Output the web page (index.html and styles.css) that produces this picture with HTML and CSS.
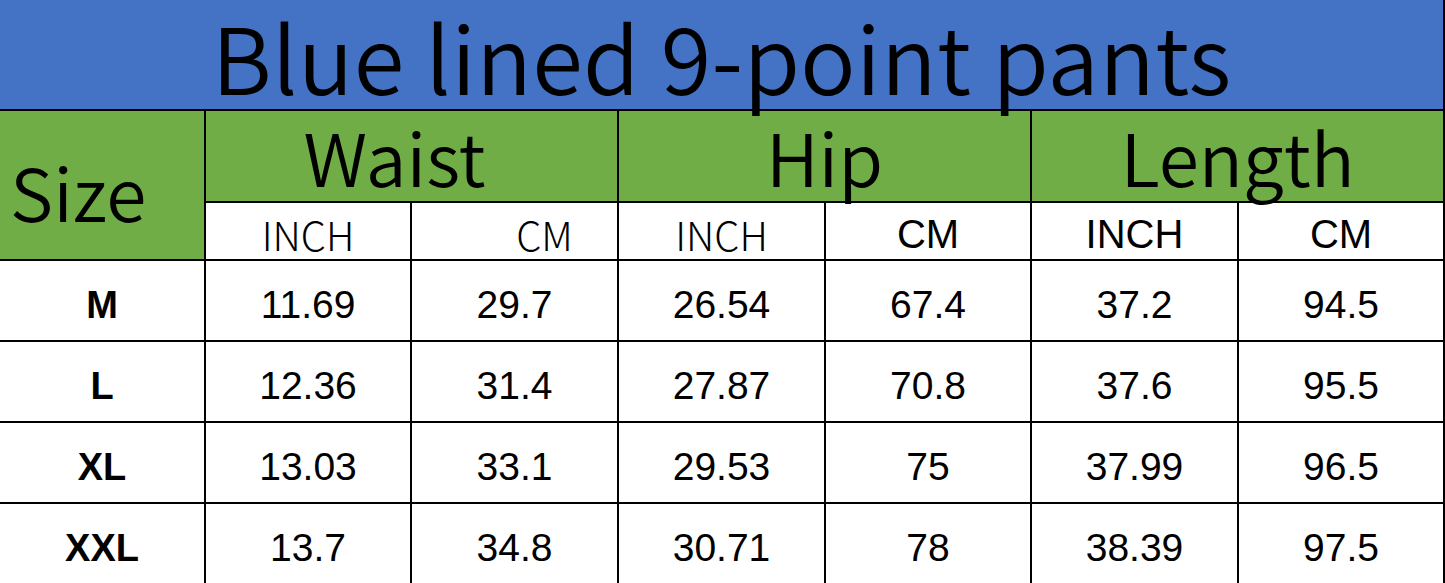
FILE: index.html
```html
<!DOCTYPE html>
<html>
<head>
<meta charset="utf-8">
<link rel="stylesheet" href="styles.css">
</head>
<body>
<table class="chart">
  <colgroup>
    <col class="c0"><col class="c1"><col class="c2"><col class="c3"><col class="c4"><col class="c5"><col class="c6">
  </colgroup>
  <tr class="r-title">
    <td colspan="7" class="title">Blue lined 9-point pants</td>
  </tr>
  <tr class="r-group">
    <td rowspan="2" class="size-head">Size</td>
    <td colspan="2" class="group waist">Waist</td>
    <td colspan="2" class="group">Hip</td>
    <td colspan="2" class="group last">Length</td>
  </tr>
  <tr class="r-unit">
    <td class="unit thin">INCH</td>
    <td class="unit thin shift">CM</td>
    <td class="unit thin">INCH</td>
    <td class="unit">CM</td>
    <td class="unit">INCH</td>
    <td class="unit last">CM</td>
  </tr>
  <tr class="r-data">
    <td class="size">M</td><td>11.69</td><td>29.7</td><td>26.54</td><td>67.4</td><td>37.2</td><td class="last">94.5</td>
  </tr>
  <tr class="r-data">
    <td class="size">L</td><td>12.36</td><td>31.4</td><td>27.87</td><td>70.8</td><td>37.6</td><td class="last">95.5</td>
  </tr>
  <tr class="r-data">
    <td class="size">XL</td><td>13.03</td><td>33.1</td><td>29.53</td><td>75</td><td>37.99</td><td class="last">96.5</td>
  </tr>
  <tr class="r-data">
    <td class="size">XXL</td><td>13.7</td><td>34.8</td><td>30.71</td><td>78</td><td>38.39</td><td class="last">97.5</td>
  </tr>
</table>
</body>
</html>
```

FILE: styles.css
```css
html, body {
  margin: 0;
  padding: 0;
  background: #ffffff;
  overflow: hidden;
}

.chart {
  border-collapse: collapse;
  table-layout: fixed;
  width: 1444px;
  font-family: "Liberation Sans", Arial, sans-serif;
  color: #000;
}

.c0 { width: 205px; }
.c1 { width: 206px; }
.c2 { width: 207px; }
.c3 { width: 207px; }
.c4 { width: 206px; }
.c5 { width: 207px; }
.c6 { width: 206px; }

.chart td {
  border: 2px solid #000;
  padding: 0;
  text-align: center;
  vertical-align: middle;
}

.chart tr > td:first-child { border-left: none; }
.r-title td { border-top: none; }
.chart td.last { border-right: 2px solid #000; }

.r-title { height: 110px; }
.r-group { height: 92px; }
.r-unit { height: 58px; }
.r-data { height: 81px; }

.title {
  background: #4472c4;
  font-family: "Noto Sans CJK SC", "Noto Sans", sans-serif;
  font-weight: 350;
  font-size: 92px;
  letter-spacing: 0.3px;
  line-height: 96px;
  padding-bottom: 6px !important;
  vertical-align: bottom !important;
  white-space: nowrap;
}

.size-head {
  background: #70ad47;
  font-family: "Noto Sans CJK SC", "Noto Sans", sans-serif;
  font-weight: 350;
  font-size: 73px;
  text-align: left !important;
  padding-left: 10px !important;
  padding-top: 10px !important;
  line-height: 1;
}

.group {
  background: #70ad47;
  font-family: "Noto Sans CJK SC", "Noto Sans", sans-serif;
  font-weight: 350;
  font-size: 73px;
  line-height: 1;
  padding-bottom: 9px !important;
  vertical-align: bottom !important;
}

.group.waist { padding-right: 34px !important; }

.unit {
  font-size: 40px;
  line-height: 1;
  padding-top: 6px !important;
}

.unit.thin {
  font-family: "Noto Sans CJK SC", "Noto Sans", sans-serif;
  font-weight: 300;
}

.unit.shift { padding-left: 60px !important; }

.r-data td {
  font-size: 39px;
  line-height: 1;
  padding-top: 8px;
}

.r-data td.size {
  font-weight: bold;
  font-size: 38px;
}
```
